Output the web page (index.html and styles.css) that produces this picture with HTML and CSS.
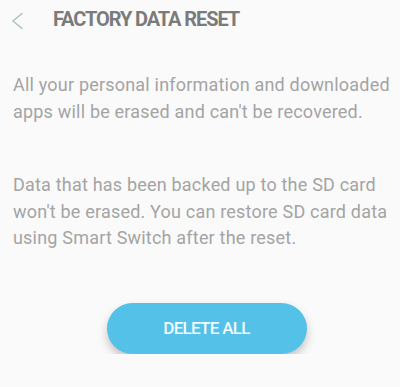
FILE: index.html
```html
<!DOCTYPE html>
<html lang="en">
<head>
  <meta charset="UTF-8">
  <title>Factory data reset</title>
  <link rel="stylesheet" href="styles.css">
</head>
<body>
  <header class="top-bar">
    <span class="back">
      <svg width="13" height="18" viewBox="0 0 13 18">
        <path d="M11 1.5 L2 9 L11 16.5" fill="none" stroke="#a3c4bf" stroke-width="1.5" stroke-linecap="round" stroke-linejoin="round"/>
      </svg>
    </span>
    <h1 class="title">FACTORY DATA RESET</h1>
  </header>

  <main class="content">
    <p class="info">All your personal information and downloaded apps will be erased and can't be recovered.</p>
    <p class="info second">Data that has been backed up to the SD card won't be erased. You can restore SD card data using Smart Switch after the reset.</p>

    <div class="actions">
      <button class="delete-btn">DELETE ALL</button>
    </div>
  </main>
</body>
</html>
```

FILE: styles.css
```css
body {
  margin: 0;
  background: #fafafa;
  font-family: Roboto, "Liberation Sans", sans-serif;
}
.top-bar {
  display: flex;
  align-items: center;
  padding: 7px 0 0 11px;
  height: 24px;
}
.back {
  display: flex;
  width: 42px;
  margin-top: 3px;
}
.title {
  margin: 0;
  font-size: 20px;
  line-height: 24px;
  font-weight: 700;
  color: #7b7b7b;
  letter-spacing: -1.1px;
}
.content {
  padding: 0 4px 0 13px;
}
.info {
  margin: 40px 0 0;
  font-size: 18px;
  line-height: 27px;
  color: #a4a4a4;
  letter-spacing: 0.2px;
}
.info.second {
  margin-top: 47px;
  line-height: 26.5px;
}
.actions {
  display: flex;
  justify-content: center;
  padding-left: 4px;
  margin-top: 51px;
}
.delete-btn {
  width: 200px;
  height: 51px;
  border: none;
  border-radius: 26px;
  background: #53c1e8;
  color: #f4fbff;
  font-family: Roboto, "Liberation Sans", sans-serif;
  font-size: 17px;
  font-weight: 500;
  letter-spacing: -0.7px;
  box-shadow: 0 5px 8px rgba(110, 90, 90, 0.35);
}
```
